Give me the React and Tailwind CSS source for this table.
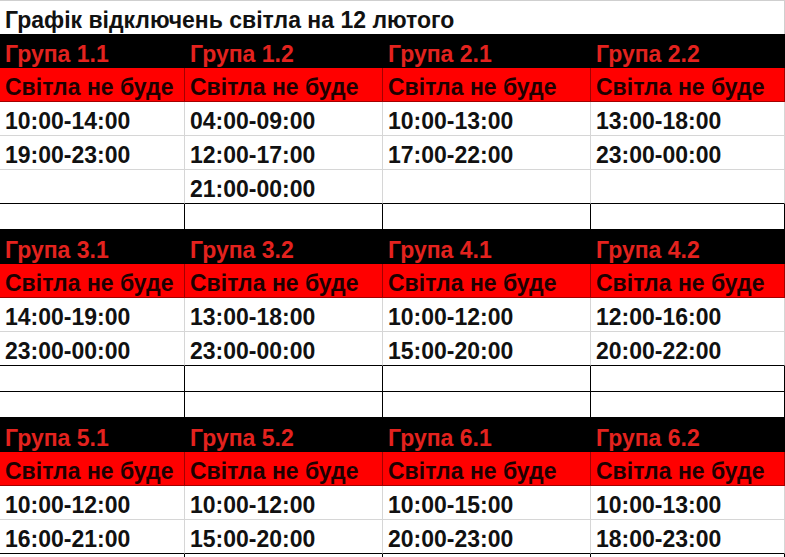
const blocks = [
  {
    groups: ["1.1", "1.2", "2.1", "2.2"],
    times: [
      ["10:00-14:00", "04:00-09:00", "10:00-13:00", "13:00-18:00"],
      ["19:00-23:00", "12:00-17:00", "17:00-22:00", "23:00-00:00"],
      ["", "21:00-00:00", "", ""],
    ],
    empty: 1,
  },
  {
    groups: ["3.1", "3.2", "4.1", "4.2"],
    times: [
      ["14:00-19:00", "13:00-18:00", "10:00-12:00", "12:00-16:00"],
      ["23:00-00:00", "23:00-00:00", "15:00-20:00", "20:00-22:00"],
    ],
    empty: 2,
  },
  {
    groups: ["5.1", "5.2", "6.1", "6.2"],
    times: [
      ["10:00-12:00", "10:00-12:00", "10:00-15:00", "10:00-13:00"],
      ["16:00-21:00", "15:00-20:00", "20:00-23:00", "18:00-23:00"],
    ],
    empty: 1,
  },
];

const cols = [0, 1, 2, 3];

const Block = ({ block, last }) => {
  return (
    <>
      {/* black header row */}
      {block.groups.map((g) => (
        <div key={"g" + g} className="h-[34px] bg-black text-[#e3221e] text-[23px] font-bold pl-[5px] pt-[6px] flex items-center whitespace-nowrap">
          Група {g}
        </div>
      ))}

      {/* red row */}
      {cols.map((c) => (
        <div key={"r" + c} className="h-[34px] bg-[#ff0000] text-[#1e0000] text-[23px] font-bold pl-[5px] pt-[5px] flex items-center border-r border-b border-[#a30000] whitespace-nowrap overflow-hidden">
          Світла не буде
        </div>
      ))}

      {/* times */}
      {block.times.map((row, i) => {
        const isLast = i === block.times.length - 1;
        return row.map((t, c) => (
          <div
            key={"t" + i + c}
            className={
              "h-[34px] text-[#111] text-[23px] font-bold pl-[5px] pt-[5px] flex items-center border-r border-b " +
              (isLast ? "border-r-[#d6d6d6] border-b-black" : "border-[#d6d6d6]")
            }
          >
            {t}
          </div>
        ));
      })}

      {/* empty rows */}
      {!last &&
        Array.from({ length: block.empty }).map((_, i) =>
          cols.map((c) => (
            <div key={"e" + i + c} className="h-[26px] border-r border-b border-black" />
          ))
        )}
      {last && cols.map((c) => <div key={"end" + c} className="h-[3px] border-r border-black" />)}
    </>
  );
};

export default function App() {
  return (
    <div className="w-[785px] h-[557px] overflow-hidden bg-white font-['Liberation_Sans',Arial,sans-serif]">
      {/* title */}
      <div className="h-[34px] border-t border-r border-[#cfcfcf] pl-[5px] pt-[6px] flex items-center text-[23px] font-bold text-[#111]">
        Графік відключень світла на 12 лютого
      </div>

      <div className="grid grid-cols-[185px_198px_208px_194px]">
        {blocks.map((b, i) => (
          <Block key={i} block={b} last={i === blocks.length - 1} />
        ))}
      </div>
    </div>
  );
}
